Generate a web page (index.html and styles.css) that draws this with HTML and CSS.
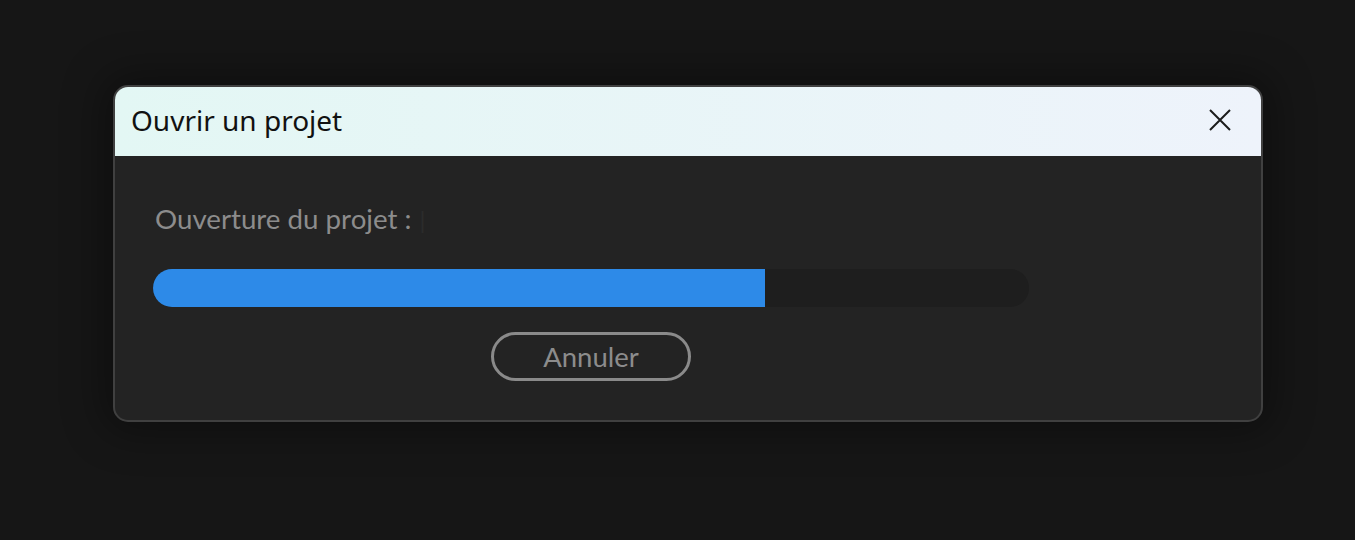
FILE: index.html
```html
<!DOCTYPE html>
<html lang="fr">
<head>
<meta charset="utf-8">
<title>Ouvrir un projet</title>
<link rel="stylesheet" href="styles.css">
</head>
<body>
<div class="stage">
  <div class="dialog">
    <div class="titlebar">
      <span class="title">Ouvrir un projet</span>
      <button class="close" aria-label="Fermer">
        <svg width="22" height="22" viewBox="0 0 22 22"><path d="M1 1 L21 21 M21 1 L1 21" stroke="#1b1b1b" stroke-width="2" fill="none"/></svg>
      </button>
    </div>
    <div class="body">
      <div class="label">Ouverture du projet :<span class="file">|</span></div>
      <div class="track"><div class="fill" style="width:612px"></div></div>
      <div class="actions"><button class="btn">Annuler</button></div>
    </div>
  </div>
</div>
</body>
</html>
```
FILE: styles.css
```css
html, body {
  margin: 0;
  padding: 0;
  background: #161616;
  width: 1355px;
  height: 540px;
  overflow: hidden;
}
.stage {
  padding: 85px 0 0 113px;
}
.dialog {
  width: 1146px;
  height: 333px;
  border: 2px solid #404040;
  border-radius: 15px;
  background: #232323;
  overflow: hidden;
  box-shadow: 0 0 40px 10px rgba(0,0,0,0.35);
}
.titlebar {
  height: 69px;
  background: linear-gradient(90deg, #e3f7f4 0%, #eef3fb 100%);
  display: flex;
  align-items: center;
  justify-content: space-between;
  padding: 0 30px 0 16px;
}
.title {
  font-family: "Noto Sans", sans-serif;
  font-size: 28px;
  color: #111;
  margin-top: -3px;
}
.close {
  border: 0;
  background: transparent;
  padding: 0;
  width: 22px;
  height: 22px;
  display: flex;
  margin-top: -3px;
}
.body {
  padding: 43px 0 0 38px;
}
.label {
  font-family: "Lato", sans-serif;
  font-size: 27.7px;
  color: #8c8c8c;
  height: 40px;
  line-height: 40px;
  padding-left: 2px;
}
.file {
  color: #2c2c2c;
  margin-left: 8px;
  font-size: 24px;
}
.track {
  margin-top: 30px;
  width: 876px;
  height: 38px;
  border-radius: 19px;
  background: #1e1e1e;
  overflow: hidden;
}
.fill {
  height: 100%;
  background: #2d8ae8;
}
.actions {
  width: 876px;
  display: flex;
  justify-content: center;
  margin-top: 25px;
}
.btn {
  width: 200px;
  height: 49px;
  border: 3px solid #8a8a8a;
  border-radius: 25px;
  background: transparent;
  font-family: "Lato", sans-serif;
  font-size: 27.5px;
  color: #8c8c8c;
  padding: 0;
}
```
